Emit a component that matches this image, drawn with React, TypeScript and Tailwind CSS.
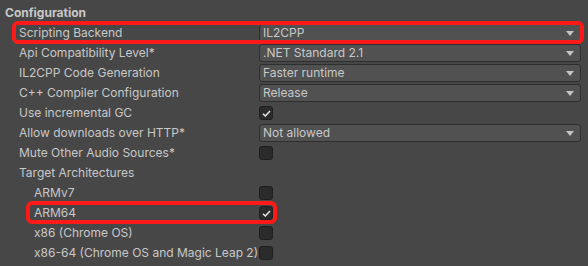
import { ReactNode } from 'react';

type Row =
  | { label: string; kind: 'dropdown'; value: string; indent?: boolean; highlight?: boolean }
  | { label: string; kind: 'check'; checked: boolean; indent?: boolean; highlight?: boolean }
  | { label: string; kind: 'none'; indent?: boolean; highlight?: boolean };

const rows: Row[] = [
  { label: 'Scripting Backend', kind: 'dropdown', value: 'IL2CPP', highlight: true },
  { label: 'Api Compatibility Level*', kind: 'dropdown', value: '.NET Standard 2.1' },
  { label: 'IL2CPP Code Generation', kind: 'dropdown', value: 'Faster runtime' },
  { label: 'C++ Compiler Configuration', kind: 'dropdown', value: 'Release' },
  { label: 'Use incremental GC', kind: 'check', checked: true },
  { label: 'Allow downloads over HTTP*', kind: 'dropdown', value: 'Not allowed' },
  { label: 'Mute Other Audio Sources*', kind: 'check', checked: false },
  { label: 'Target Architectures', kind: 'none' },
  { label: 'ARMv7', kind: 'check', checked: false, indent: true },
  { label: 'ARM64', kind: 'check', checked: true, indent: true, highlight: true },
  { label: 'x86 (Chrome OS)', kind: 'check', checked: false, indent: true },
  { label: 'x86-64 (Chrome OS and Magic Leap 2)', kind: 'check', checked: false, indent: true },
  // next row is cut off by the window, only its checkbox peeks in
  { label: '', kind: 'check', checked: false },
];

function Dropdown({ value }: { value: string }) {
  return (
    <div className="flex h-[18px] flex-1 items-center justify-between rounded-[3px] border border-[#2e2e2e] bg-[#515151] pl-[3px] pr-[6px]">
      <span className="truncate">{value}</span>
      <svg width="8" height="5" viewBox="0 0 8 5" className="shrink-0">
        <path d="M0 0 H8 L4 5 Z" fill="#c4c4c4" />
      </svg>
    </div>
  );
}

function Checkbox({ checked }: { checked: boolean }) {
  return (
    <div className="flex h-[14px] w-[14px] items-center justify-center rounded-[3px] border border-[#1f1f1f] bg-[#2b2b2b]">
      {checked && (
        <svg width="9" height="7" viewBox="0 0 9 7">
          <path d="M1 3.8 L3.3 6 L8 1" fill="none" stroke="#e6e6e6" strokeWidth="1.5" />
        </svg>
      )}
    </div>
  );
}

function Field({ row }: { row: Row }) {
  let control: ReactNode = null;
  if (row.kind === 'dropdown') control = <Dropdown value={row.value} />;
  if (row.kind === 'check') control = <Checkbox checked={row.checked} />;

  return (
    <div className="relative flex h-5 items-center">
      <div className={row.indent ? 'w-[259px] shrink-0 pl-[34px]' : 'w-[259px] shrink-0 pl-[19px]'}>
        {row.label}
      </div>
      <div className="flex flex-1 items-center pr-[7px]">{control}</div>
      {row.highlight && row.kind === 'dropdown' && (
        <div className="pointer-events-none absolute -top-[2px] -bottom-px left-[12px] right-[4px] rounded-[6px] border-4 border-[#ff1a1a]" />
      )}
      {row.highlight && row.kind === 'check' && (
        <div className="pointer-events-none absolute -top-[2px] -bottom-px left-[26px] w-[251px] rounded-[6px] border-4 border-[#ff1a1a]" />
      )}
    </div>
  );
}

export default function App() {
  return (
    <div
      className="h-[266px] w-[588px] overflow-hidden bg-[#474747] pt-[3px] text-[12px] text-[#c8c8c8]"
      style={{ fontFamily: 'Inter, "Noto Sans", sans-serif' }}
    >
      <div className="flex h-5 items-center pl-[5px] font-bold">Configuration</div>
      {rows.map((row, i) => (
        <Field key={i} row={row} />
      ))}
    </div>
  );
}
